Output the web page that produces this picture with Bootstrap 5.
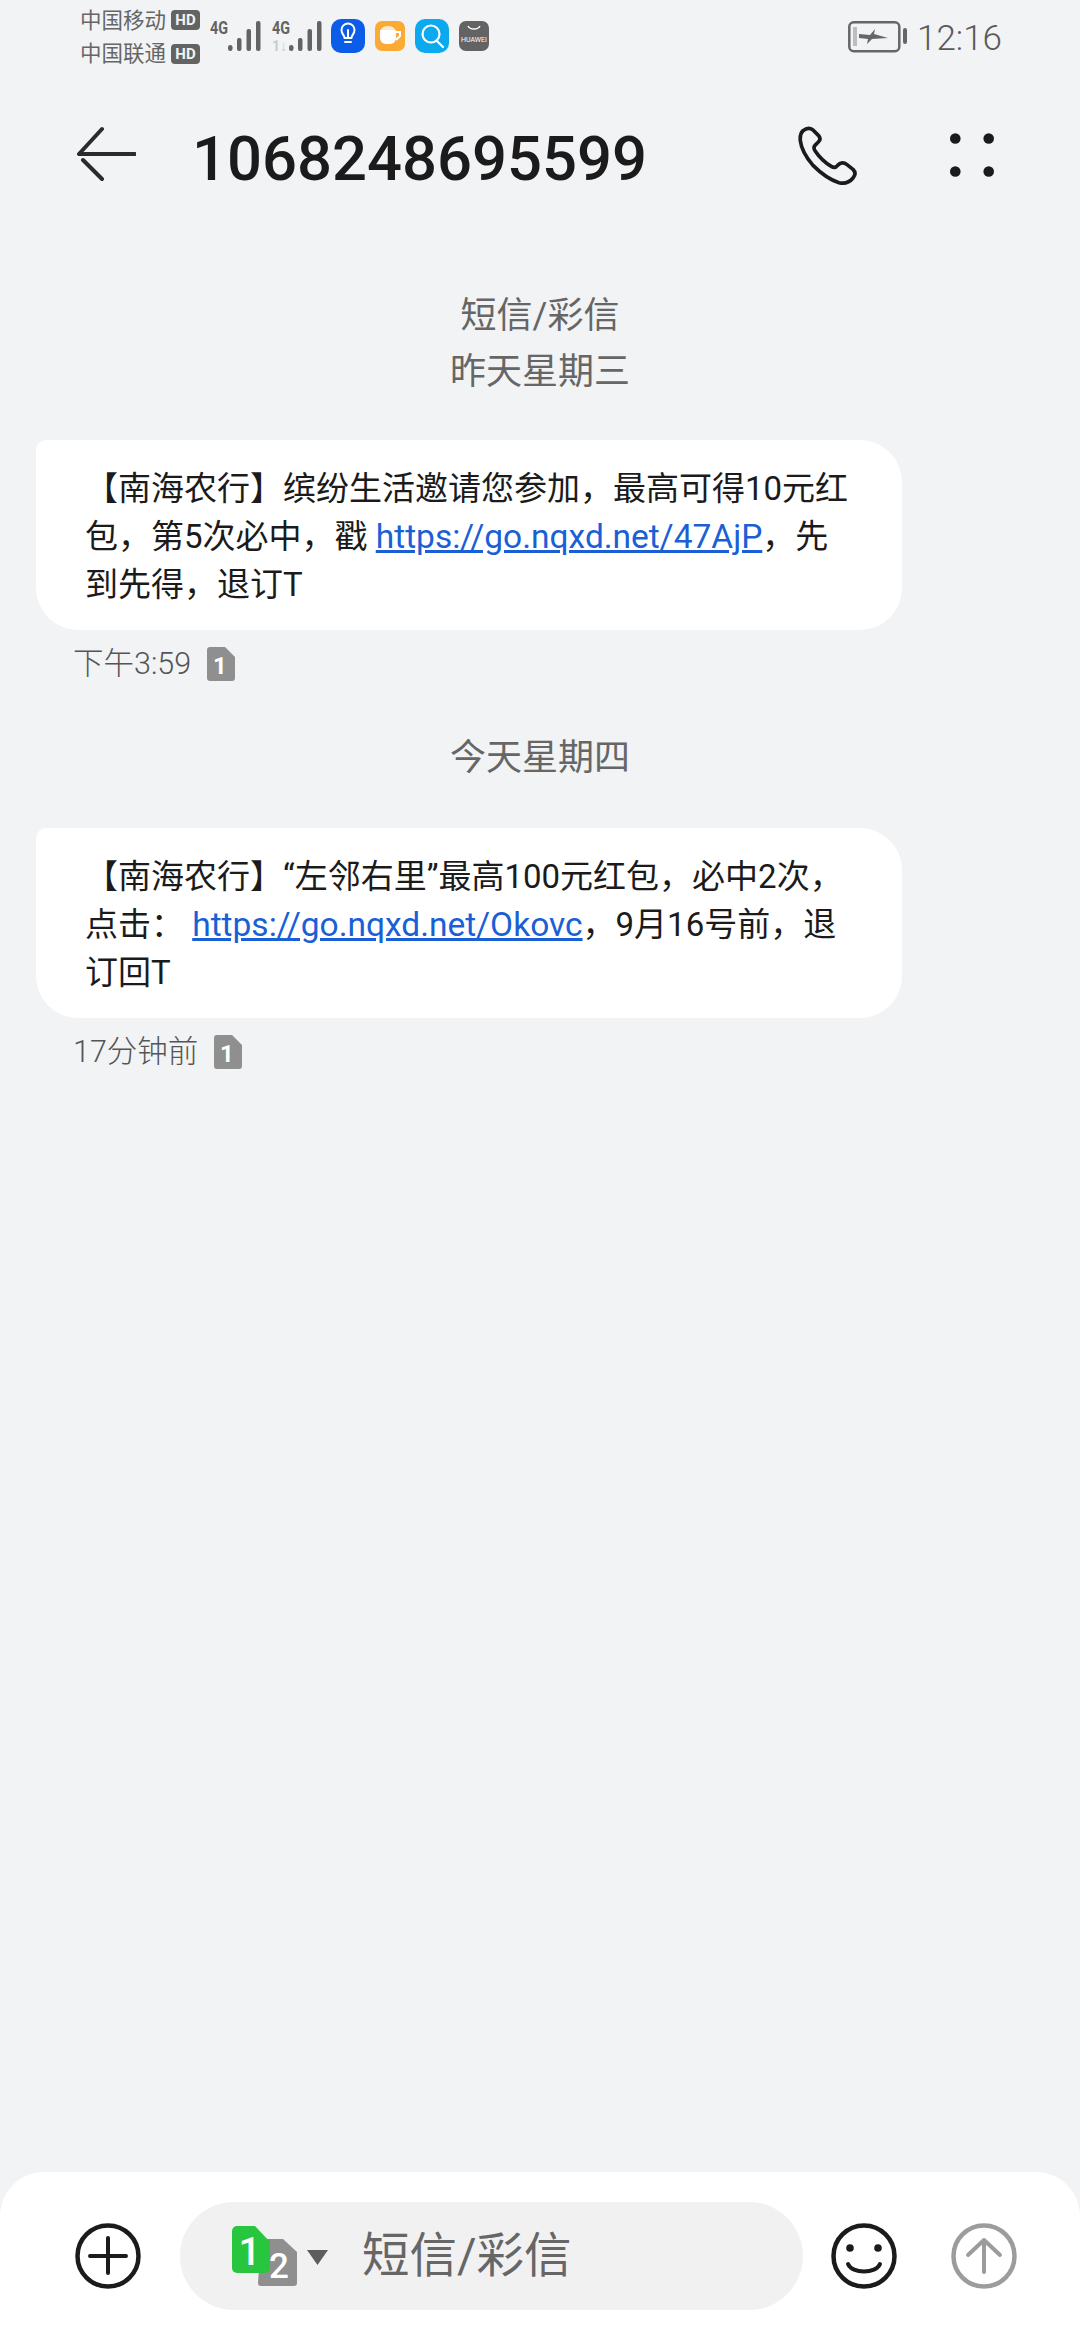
<!DOCTYPE html>
<html lang="zh-CN">
  <head>
    <meta charset="UTF-8" />
    <meta name="viewport" content="width=device-width, initial-scale=1.0" />
    <title>1068248695599</title>
    <link rel="stylesheet" href="https://cdn.jsdelivr.net/npm/bootstrap@5.3.0/dist/css/bootstrap.min.css" />
    <style>
      html, body { height: 2340px; overflow: hidden; }
      body {
        background-color: #f1f3f5;
        font-family: Roboto, "Noto Sans CJK SC", sans-serif;
        color: #1b1b1b;
      }
      .app-shell { height: 2340px; }

      .status-strip { height: 75px; padding: 0 78px 1px 80px; color: #666; }
      .carrier-col { font-size: 21.5px; line-height: 33.5px; width: 120px; flex: none; }
      .carrier-row { height: 33.5px; }
      .hd-tag {
        background: #636363; color: #f1f3f5; border-radius: 4px;
        font-size: 15px; font-weight: 700; line-height: 20px;
        width: 29px; height: 20px; text-align: center; margin-left: 5px;
      }
      .status-icons { flex: none; align-self: flex-start; }
      .clock-text { font-size: 35px; line-height: 40px; font-weight: 300; color: #5a5a5a; margin-left: 9px; padding-top: 4px; }

      .top-head { height: 160px; padding: 0 86px 0 76px; }
      .peer-number { font-size: 61.6px; font-weight: 500; line-height: 70px; margin: 7px 0 0 56px; }
      .head-gap { gap: 91px; }

      .thread-body { padding-top: 53px; }
      .day-label { font-size: 36px; line-height: 56px; color: #666; text-align: center; }
      .bubble-msg {
        width: 866px; margin: 40px 0 0 36px; padding: 25px 49px 21px;
        background: #fff; border-radius: 10px 42px 42px 42px;
        font-size: 33px; line-height: 48px; color: #1b1b1b;
      }
      .bubble-msg a { color: #1a5fd6; font-size: 33.5px; }
      .msg-meta { margin: 16px 0 0 73px; height: 36px; font-size: 30.5px; line-height: 36px; font-weight: 300; color: #555; gap: 16px; }
      .day-gap { margin-top: 48px; padding-bottom: 2px; }

      .compose-bar {
        height: 168px; background: #fff; border-radius: 44px 44px 0 0;
        padding: 30px 63px 30px 75px;
      }
      .compose-pill {
        width: 623px; height: 108px; margin: 0 28px 0 39px;
        background: #f1f1f2; border-radius: 54px; padding-left: 52px;
      }
      .compose-hint { font-size: 47.5px; line-height: 60px; color: #666; margin-left: 34px; }
      .compose-gap { gap: 54px; }
    </style>
  </head>
  <body>
    <div class="app-shell d-flex flex-column">
      <!-- status bar -->
      <div class="status-strip d-flex align-items-center">
        <div class="carrier-col">
          <div class="carrier-row d-flex align-items-center"><span>中国移动</span><span class="hd-tag">HD</span></div>
          <div class="carrier-row d-flex align-items-center"><span>中国联通</span><span class="hd-tag">HD</span></div>
        </div>
        <svg class="status-icons" width="300" height="75" viewBox="0 0 300 75">
          <g fill="#636363">
            <text x="10" y="34" font-family="Roboto" font-size="19" font-weight="700" textLength="18" lengthAdjust="spacingAndGlyphs">4G</text>
            <rect x="28" y="45" width="4.500" height="6" rx="2.200" />
            <rect x="37" y="38" width="4.500" height="13" rx="2" />
            <rect x="46.500" y="29" width="4.500" height="22" rx="2" />
            <rect x="56" y="21" width="4.500" height="30" rx="2" />
            <text x="72" y="34" font-family="Roboto" font-size="19" font-weight="700" textLength="18" lengthAdjust="spacingAndGlyphs">4G</text>
            <text x="72" y="51" font-family="Roboto" font-size="14" font-weight="700" fill="#c9cbcd">1↓</text>
            <rect x="89" y="45" width="4.500" height="6" rx="2.200" />
            <rect x="98" y="38" width="4.500" height="13" rx="2" />
            <rect x="107.500" y="29" width="4.500" height="22" rx="2" />
            <rect x="117" y="21" width="4.500" height="30" rx="2" />
          </g>
          <!-- app badges -->
          <rect x="131" y="19" width="34" height="34" rx="10" fill="#0b5ce6" />
          <path d="M144.500 38c0-3-3-4-3-8a6.500 6.500 0 0 1 13 0c0 4-3 5-3 8z" fill="none" stroke="#fff" stroke-width="2" stroke-linejoin="round" />
          <path d="M145 42h6M148 30v7" stroke="#fff" stroke-width="2" fill="none" stroke-linecap="round" />
          <rect x="175" y="21" width="30" height="30" rx="7" fill="#fbab34" />
          <path d="M180 30h16v8a6 6 0 0 1-6 6h-4a6 6 0 0 1-6-6z" fill="#fff" />
          <path d="M181 30a7 4 0 0 1 14 0" fill="#fff" opacity=".75" />
          <path d="M196 32h4v4l-4 4" fill="none" stroke="#fff" stroke-width="2" />
          <rect x="215" y="19" width="34" height="34" rx="10" fill="#0ba9ee" />
          <circle cx="231" cy="34" r="8.500" fill="none" stroke="#fff" stroke-width="2.200" />
          <path d="M237 41l6 6" stroke="#fff" stroke-width="2.200" stroke-linecap="round" />
          <rect x="259" y="21" width="30" height="30" rx="7" fill="#636363" />
          <path d="M268 26a6.500 5 0 0 0 12 0" fill="none" stroke="#fff" stroke-width="1.500" />
          <text x="274" y="42" text-anchor="middle" font-family="Roboto" font-size="7" fill="#fff">HUAWEI</text>
        </svg>
        <div class="ms-auto d-flex align-items-center">
          <svg width="60" height="32" viewBox="0 0 60 32">
            <rect x="1.300" y="1.300" width="50" height="29" rx="4.500" fill="none" stroke="#666" stroke-width="2.500" />
            <rect x="5" y="6" width="4" height="19" fill="#bdbdbd" />
            <path d="M11 13l11 1 5-6-1 5 14 4-16 1-5 5 1-5-9-1z" fill="#666" />
            <rect x="55" y="7" width="4" height="16" rx="2" fill="#666" />
          </svg>
          <span class="clock-text">12:16</span>
        </div>
      </div>

      <!-- title row -->
      <div class="top-head d-flex align-items-center">
        <svg width="60" height="60" viewBox="0 0 60 60">
          <path d="M26 4L3 29h56M7 35l19 19" fill="none" stroke="#2b2b2b" stroke-width="4" stroke-linecap="round" stroke-linejoin="round" />
        </svg>
        <div class="peer-number">1068248695599</div>
        <div class="ms-auto d-flex align-items-center head-gap">
          <svg width="63" height="63" viewBox="79 42 189 189">
            <path d="M100 62Q116 50 130 60L146 76Q156 86 146 96L136 106Q130 112 136 122Q156 152 186 170Q196 176 204 166L212 160Q222 156 232 164L250 178Q262 190 250 204Q234 224 208 218Q170 206 130 166Q96 126 92 92Q90 72 100 62Z" fill="none" stroke="#1b1b1b" stroke-width="11" stroke-linejoin="round" />
          </svg>
          <svg width="44" height="44" viewBox="0 0 44 44" fill="#1b1b1b">
            <circle cx="5.300" cy="5.500" r="5.300" /><circle cx="38.700" cy="5.500" r="5.300" />
            <circle cx="5.300" cy="38.500" r="5.300" /><circle cx="38.700" cy="38.500" r="5.300" />
          </svg>
        </div>
      </div>

      <!-- thread -->
      <div class="thread-body flex-grow-1">
        <div class="day-label">短信/彩信<br />昨天星期三</div>
        <div class="bubble-msg">【南海农行】缤纷生活邀请您参加，最高可得10元红包，第5次必中，戳 <a href="#">https://go.nqxd.net/47AjP</a>，先到先得，退订T</div>
        <div class="msg-meta d-flex align-items-center">
          <span>下午3:59</span>
          <svg width="28" height="34" viewBox="0 0 28 34">
            <path d="M3 0h15l10 10v21a3 3 0 0 1-3 3H3a3 3 0 0 1-3-3V3a3 3 0 0 1 3-3z" fill="#8f8f8f" />
            <text x="13" y="27" text-anchor="middle" font-family="Roboto" font-size="24" font-weight="700" fill="#fff">1</text>
          </svg>
        </div>
        <div class="day-label day-gap">今天星期四</div>
        <div class="bubble-msg">【南海农行】“左邻右里”最高100元红包，必中2次，点击： <a href="#">https://go.nqxd.net/Okovc</a>，9月16号前，退订回T</div>
        <div class="msg-meta d-flex align-items-center">
          <span>17分钟前</span>
          <svg width="28" height="34" viewBox="0 0 28 34">
            <path d="M3 0h15l10 10v21a3 3 0 0 1-3 3H3a3 3 0 0 1-3-3V3a3 3 0 0 1 3-3z" fill="#8f8f8f" />
            <text x="13" y="27" text-anchor="middle" font-family="Roboto" font-size="24" font-weight="700" fill="#fff">1</text>
          </svg>
        </div>
      </div>

      <!-- compose -->
      <div class="compose-bar d-flex align-items-center">
        <svg width="66" height="66" viewBox="0 0 66 66">
          <circle cx="33" cy="33" r="30.500" fill="none" stroke="#1b1b1b" stroke-width="4.500" />
          <path d="M15 33h36M33 15v35" stroke="#1b1b1b" stroke-width="4" stroke-linecap="round" />
        </svg>
        <div class="compose-pill d-flex align-items-center">
          <svg width="96" height="60" viewBox="0 0 96 60">
            <path d="M29 13h22l14 13v31a3 3 0 0 1-3 3H29a3 3 0 0 1-3-3z" fill="#8f8f8f" />
            <path d="M5 0h18l15 16v26a5 5 0 0 1-5 5H5a5 5 0 0 1-5-5V5a5 5 0 0 1 5-5z" fill="#28c63f" />
            <text x="17.500" y="39" text-anchor="middle" font-family="Roboto" font-size="39" font-weight="500" fill="#fff">1</text>
            <text x="47" y="52" text-anchor="middle" font-family="Roboto" font-size="35" font-weight="500" fill="#fff">2</text>
            <path d="M75 24h21L85.500 39z" fill="#5d5d5d" />
          </svg>
          <span class="compose-hint">短信/彩信</span>
        </div>
        <div class="d-flex align-items-center compose-gap">
          <svg width="66" height="66" viewBox="0 0 66 66">
            <circle cx="33" cy="33" r="30.500" fill="none" stroke="#1b1b1b" stroke-width="4.500" />
            <circle cx="19" cy="25" r="3.800" fill="#1b1b1b" /><circle cx="47" cy="25" r="3.800" fill="#1b1b1b" />
            <path d="M17 41c4 10 28 10 32 0" fill="none" stroke="#1b1b1b" stroke-width="4" stroke-linecap="round" />
          </svg>
          <svg width="66" height="66" viewBox="0 0 66 66">
            <circle cx="33" cy="33" r="30.500" fill="none" stroke="#9c9c9c" stroke-width="4.500" />
            <path d="M33 49V17M17 32l16-15 16 15" fill="none" stroke="#9c9c9c" stroke-width="4" stroke-linecap="round" stroke-linejoin="round" />
          </svg>
        </div>
      </div>
    </div>
    <script src="https://cdn.jsdelivr.net/npm/bootstrap@5.3.0/dist/js/bootstrap.bundle.min.js"></script>
  </body>
</html>
